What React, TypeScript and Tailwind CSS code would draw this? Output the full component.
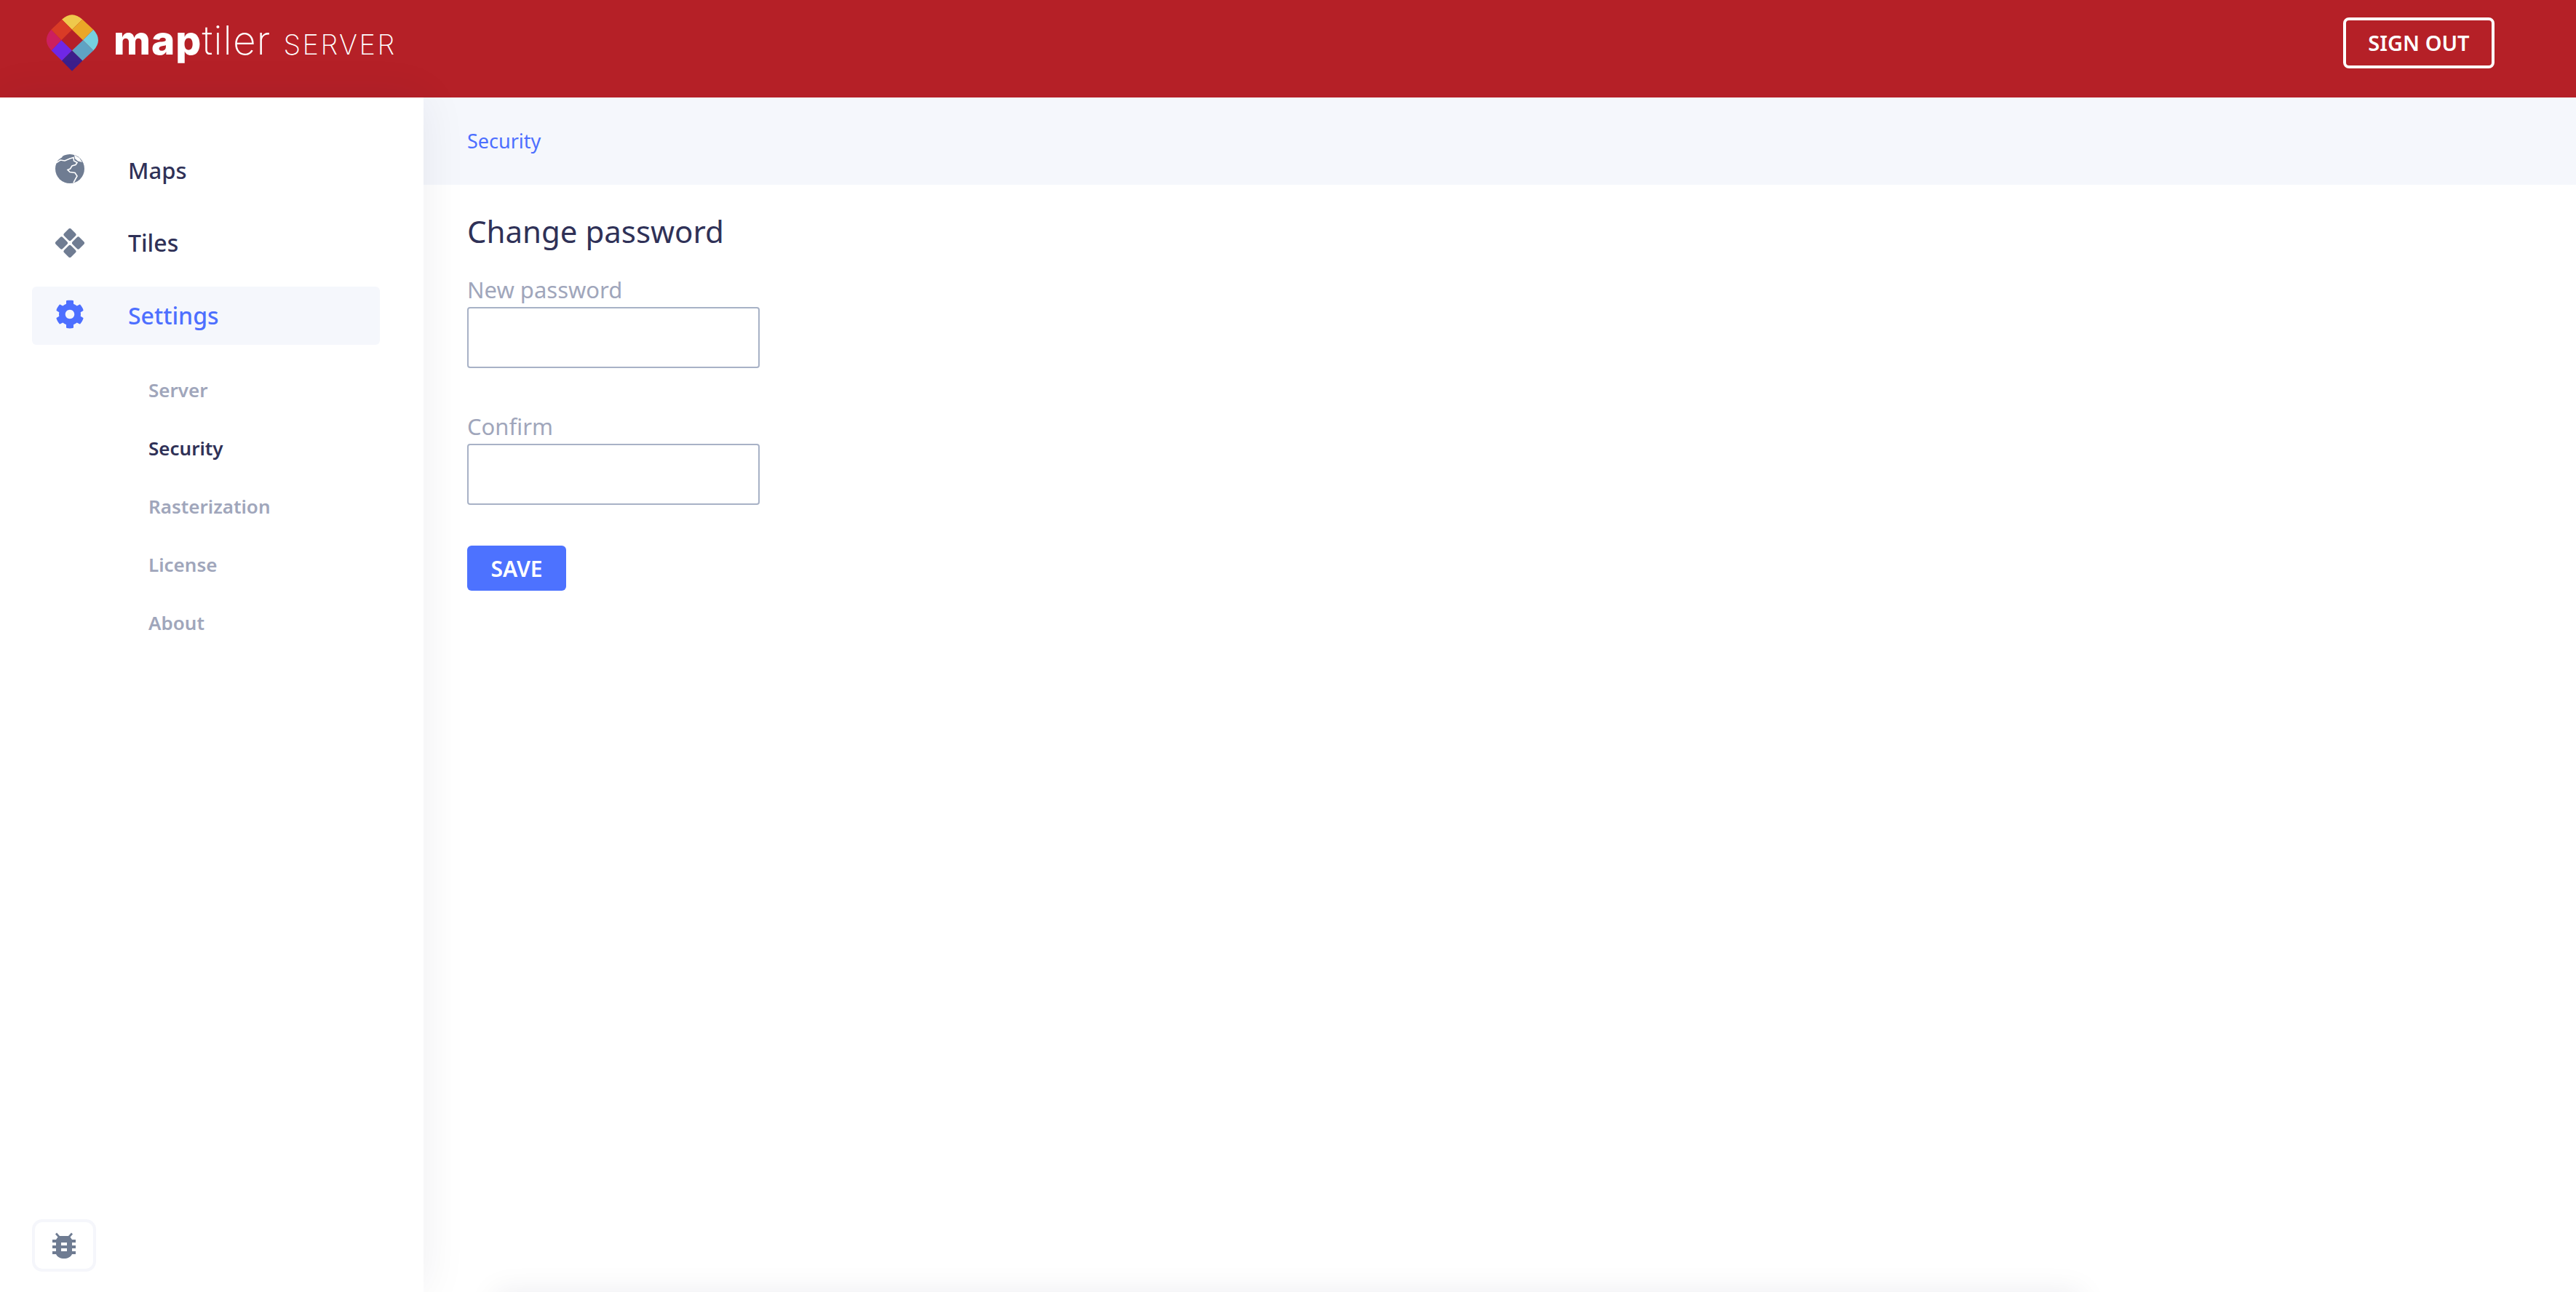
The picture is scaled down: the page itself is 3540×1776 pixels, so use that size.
import { FaCog } from "react-icons/fa"

const subItems = [
  { label: "Server", active: false },
  { label: "Security", active: true },
  { label: "Rasterization", active: false },
  { label: "License", active: false },
  { label: "About", active: false },
]

function Logo() {
  return (
    <svg width="71" height="78" viewBox="72 60 213 233" className="shrink-0">
      <path d="M135 80Q177 40 220 80L177 122Z" fill="#efc94c" />
      <path d="M135 80L177 122L133 165L91 122Z" fill="#d93b26" />
      <path d="M220 80L265 122L222 165L177 122Z" fill="#eba727" />
      <path d="M91 122Q52 165 92 208L133 165Z" fill="#cc1f5e" />
      <path d="M265 122Q305 165 265 208L222 165Z" fill="#76d0df" />
      <path d="M133 165L177 208L135 250L92 208Z" fill="#6f27e6" />
      <path d="M222 165L265 208L220 250L177 208Z" fill="#5fa3c4" />
      <path d="M177 208L220 250L177 293L135 250Z" fill="#3c1f8c" />
    </svg>
  )
}

function GlobeIcon() {
  return (
    <svg width="40" height="40" viewBox="0 0 40 40" className="-translate-y-[2px]">
      <circle cx="20" cy="20" r="20" fill="#6f7c92" />
      <path
        d="M1 12L7 8L13 9L20 6L25 4.5L25.5 9L30 11.5L28 14.5L23 16L20.5 20L17 21.5L20 24.5L27 25.5L30 30L25 39"
        fill="none"
        stroke="#ffffff"
        strokeWidth="1.6"
      />
      <path d="M26 1L33 5L37 11L31 9.5L27 6Z" fill="#ffffff" />
      <path d="M1 10L5 4L11 1L9 4.5L5 7Z" fill="#ffffff" />
    </svg>
  )
}

function TilesIcon() {
  return (
    <svg width="40" height="40" viewBox="0 0 40 40" fill="#6f7c92">
      <rect x="13.25" y="1.75" width="13.5" height="13.5" rx="2.5" transform="rotate(45 20 8.5)" />
      <rect x="24.75" y="13.25" width="13.5" height="13.5" rx="2.5" transform="rotate(45 31.5 20)" />
      <rect x="13.25" y="24.75" width="13.5" height="13.5" rx="2.5" transform="rotate(45 20 31.5)" />
      <rect x="1.75" y="13.25" width="13.5" height="13.5" rx="2.5" transform="rotate(45 8.5 20)" />
    </svg>
  )
}

function BugIcon() {
  return (
    <svg width="32" height="36" viewBox="0 0 32 36" fill="#6f7c92">
      <path d="M6 0.5L10 5H22L26 0.5L28 2.5L24.5 6.5L27 10H32V14H27V18H32V22H27V26H32V30H27C25 34 21 36 16 36C11 36 7 34 5 30H0V26H5V22H0V18H5V14H0V10H5L7.5 6.5L4 2.5Z" />
      <rect x="12" y="14" width="8" height="4" fill="#ffffff" />
      <rect x="12" y="22" width="8" height="4" fill="#ffffff" />
    </svg>
  )
}

export default function App() {
  return (
    <div className="flex h-screen flex-col overflow-hidden bg-white font-['Noto_Sans',sans-serif] text-[#2f3157]">
      {/* Header */}
      <header className="flex h-[134px] shrink-0 items-center justify-between bg-[#b52027] pr-[112px] pb-[16px] pl-[64px]">
        <div className="flex items-center">
          <Logo />
          <div className="mb-[8px] ml-[21px] flex items-baseline text-white">
            <span className="font-['Inter',sans-serif] text-[55px] leading-none font-extrabold tracking-[1px]">map</span>
            <span className="font-['Inter',sans-serif] text-[55px] leading-none font-extralight tracking-[1px]">tiler</span>
            <span className="ml-[17px] font-['Inter',sans-serif] text-[38px] leading-none font-extralight tracking-[2.5px]">SERVER</span>
          </div>
        </div>
        <button className="flex h-[70px] w-[208px] items-center justify-center rounded-[8px] border-4 border-white text-[29px] font-semibold text-white">
          SIGN OUT
        </button>
      </header>

      <div className="flex min-h-0 flex-1">
        {/* Sidebar */}
        <aside className="relative z-10 flex w-[582px] shrink-0 flex-col justify-between bg-white pt-[60px] pr-[60px] pb-[28px] pl-[44px] shadow-[0_0_60px_rgba(30,30,60,0.07)]">
          <nav className="flex flex-col gap-[20px]">
            <a className="flex h-[80px] items-center gap-[60px] pl-[32px] text-[31px] font-medium">
              <GlobeIcon />
              <span>Maps</span>
            </a>
            <a className="flex h-[80px] items-center gap-[60px] pl-[32px] text-[32px] font-medium">
              <TilesIcon />
              <span>Tiles</span>
            </a>
            <a className="flex h-[80px] items-center gap-[60px] rounded-[6px] bg-[#f5f7fc] pl-[32px] text-[32px] font-medium text-[#4d6fff]">
              <FaCog className="size-[40px] -translate-y-[2px]" />
              <span>Settings</span>
            </a>
            <ul className="flex flex-col pt-[2px] pl-[160px]">
              {subItems.map((item) => (
                <li
                  key={item.label}
                  className={`flex h-[80px] items-center text-[26px] font-semibold ${item.active ? "text-[#2f3157]" : "text-[#a0a6bb]"}`}
                >
                  {item.label}
                </li>
              ))}
            </ul>
          </nav>
          <button className="flex h-[72px] w-[88px] items-center justify-center rounded-[14px] border-4 border-[#f5f6fb]">
            <BugIcon />
          </button>
        </aside>

        {/* Main */}
        <main className="relative min-w-0 flex-1 overflow-hidden">
          <div className="flex h-[120px] items-center bg-[#f5f7fc] px-[60px] text-[27px] text-[#4d6fff]">Security</div>
          <div className="px-[60px] pt-[34px]">
            <h1 className="text-[42px] leading-[60px] font-normal">Change password</h1>
            <form className="mt-[26px] flex w-[402px] flex-col">
              <label className="text-[31px] leading-[48px] text-[#a0a6bb]">New password</label>
              <input type="password" className="h-[84px] rounded-[4px] border-2 border-[#a8b2c6] bg-white" />
              <label className="mt-[56px] text-[31px] leading-[48px] text-[#a0a6bb]">Confirm</label>
              <input type="password" className="h-[84px] rounded-[4px] border-2 border-[#a8b2c6] bg-white" />
              <button className="mt-[56px] h-[62px] w-[136px] rounded-[6px] bg-[#4d72ff] text-[30px] font-semibold text-white">
                SAVE
              </button>
            </form>
          </div>
          {/* shadow of the clipped panel under the page fold */}
          <div className="absolute top-full left-[98px] h-[40px] w-[2180px] shadow-[0_0_40px_rgba(30,30,60,0.08)]" />
        </main>
      </div>
    </div>
  )
}
